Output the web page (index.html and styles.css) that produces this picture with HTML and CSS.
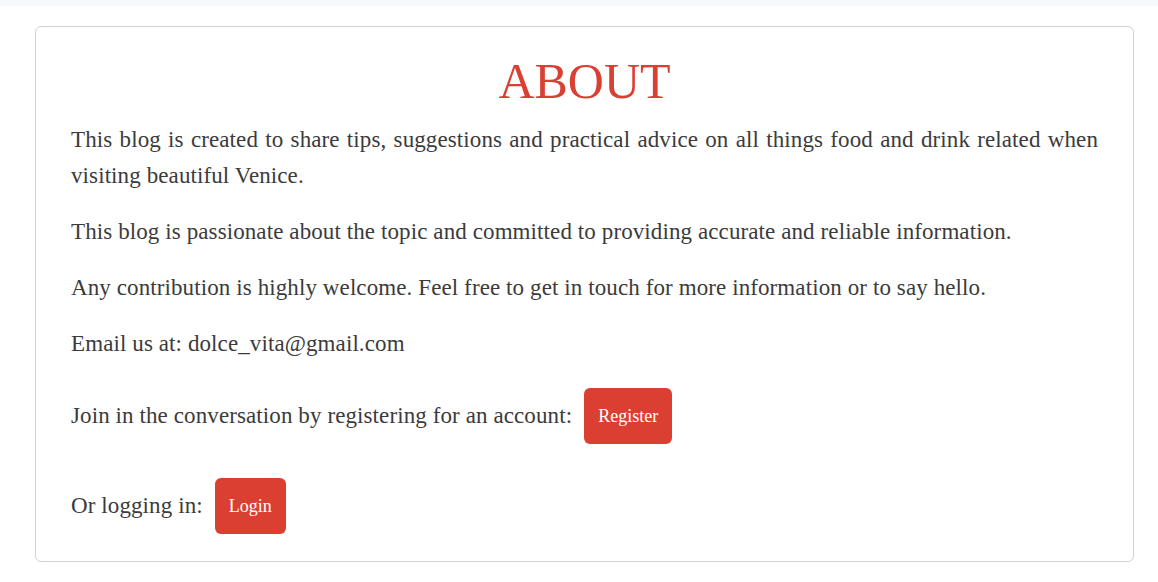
FILE: index.html
```html
<!DOCTYPE html>
<html lang="en">
<head>
<meta charset="utf-8">
<title>About</title>
<link rel="stylesheet" href="styles.css">
</head>
<body>
<div class="topbar"></div>
<main class="page">
  <section class="card">
    <h1 class="title">ABOUT</h1>
    <p class="text justify">This blog is created to share tips, suggestions and practical advice on all things food and drink related when visiting beautiful Venice.</p>
    <p class="text">This blog is passionate about the topic and committed to providing accurate and reliable information.</p>
    <p class="text">Any contribution is highly welcome. Feel free to get in touch for more information or to say hello.</p>
    <p class="text email">Email us at: dolce_vita@gmail.com</p>
    <p class="text action">Join in the conversation by registering for an account: <a class="btn" href="#">Register</a></p>
    <p class="text action last">Or logging in: <a class="btn" href="#">Login</a></p>
  </section>
</main>
</body>
</html>
```
FILE: styles.css
```css
html, body {
  margin: 0;
  padding: 0;
  background: #ffffff;
}
body {
  font-family: "Liberation Serif", "Times New Roman", serif;
  color: #3b3b3b;
}
.topbar {
  height: 6px;
  background: #f7f8f9;
}
.page {
  padding: 20px 24px 20px 35px;
}
.card {
  border: 1px solid #d2d2d2;
  border-radius: 6px;
  padding: 24px 35px 27px 35px;
}
.title {
  margin: 0 0 11px 0;
  text-align: center;
  font-weight: normal;
  font-size: 50px;
  line-height: 60px;
  color: #d94033;
}
.text {
  margin: 0 0 20px 0;
  font-size: 23px;
  letter-spacing: 0.1px;
  line-height: 36px;
}
.justify {
  text-align: justify;
}
.email {
  margin-bottom: 26px;
}
.action {
  display: flex;
  align-items: center;
  gap: 12px;
  margin-bottom: 34px;
}
.action.last {
  margin-bottom: 0;
}
.btn {
  display: block;
  padding: 10px 14px;
  background: #db3f31;
  color: #ffffff;
  text-decoration: none;
  font-size: 18px;
  letter-spacing: 0;
  line-height: 36px;
  border-radius: 6px;
}
```
